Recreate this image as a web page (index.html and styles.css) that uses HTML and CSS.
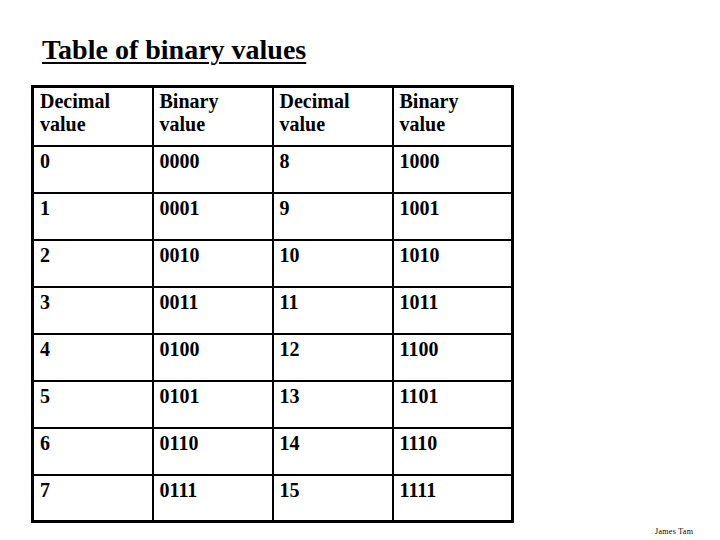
FILE: index.html
```html
<!DOCTYPE html>
<html>
<head>
<meta charset="utf-8">
<link rel="stylesheet" href="styles.css">
</head>
<body>
<div class="slide">
  <h1 class="title">Table of binary values</h1>
  <table class="bin">
    <tr class="head"><td>Decimal value</td><td>Binary value</td><td>Decimal value</td><td>Binary value</td></tr>
    <tr><td>0</td><td>0000</td><td>8</td><td>1000</td></tr>
    <tr><td>1</td><td>0001</td><td>9</td><td>1001</td></tr>
    <tr><td>2</td><td>0010</td><td>10</td><td>1010</td></tr>
    <tr><td>3</td><td>0011</td><td>11</td><td>1011</td></tr>
    <tr><td>4</td><td>0100</td><td>12</td><td>1100</td></tr>
    <tr><td>5</td><td>0101</td><td>13</td><td>1101</td></tr>
    <tr><td>6</td><td>0110</td><td>14</td><td>1110</td></tr>
    <tr><td>7</td><td>0111</td><td>15</td><td>1111</td></tr>
  </table>
  <div class="footer"><span class="author">James Tam</span></div>
</div>
</body>
</html>
```
FILE: styles.css
```css
html, body {
  margin: 0;
  padding: 0;
  background: #ffffff;
}
.slide {
  width: 720px;
  height: 540px;
  overflow: hidden;
  font-family: "Liberation Serif", "Times New Roman", serif;
  color: #000;
  padding: 0 0 0 31px;
  box-sizing: border-box;
}
.title {
  margin: 0 0 19px 0;
  padding: 34px 0 0 11px;
  font-size: 28px;
  line-height: 32px;
  font-weight: bold;
  text-decoration: underline;
  text-decoration-thickness: 2px;
  text-underline-offset: 3px;
}
.bin {
  border-collapse: collapse;
  table-layout: fixed;
  border: 3px solid #000;
  width: 482px;
}
.bin td {
  border: 2px solid #000;
  width: 120px;
  height: 47px;
  padding: 3px 6px 0 6px;
  vertical-align: top;
  font-size: 20px;
  line-height: 23px;
  font-weight: bold;
  box-sizing: border-box;
}
.bin tr.head td {
  height: 59px;
  padding-top: 2px;
}
.footer {
  display: flex;
  padding: 4px 0 0 624px;
}
.author {
  font-size: 8px;
  line-height: 10px;
  letter-spacing: 0.3px;
  color: #000;
}
```
